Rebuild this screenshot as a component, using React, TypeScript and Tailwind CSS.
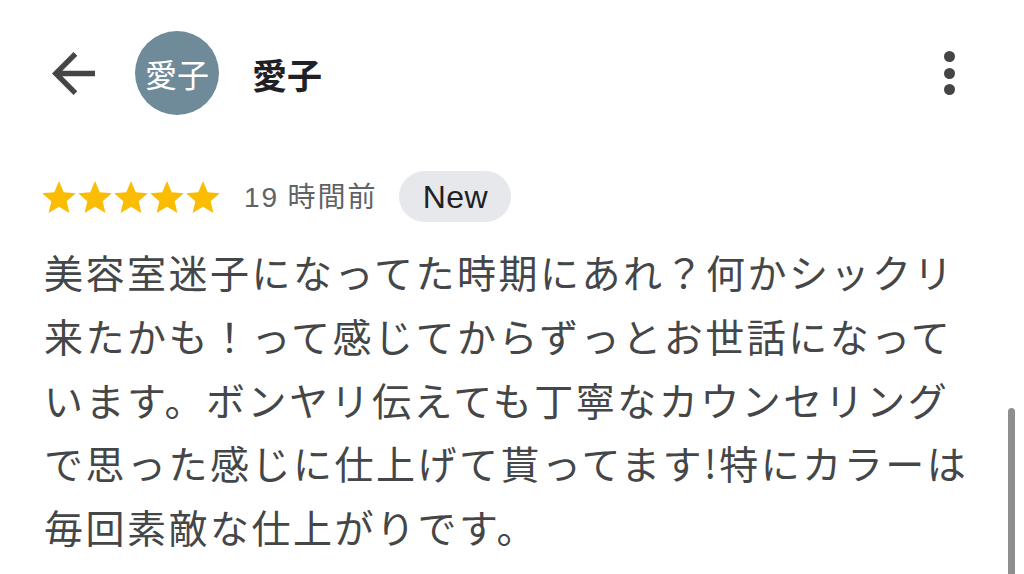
import React from 'react';

const jp = { fontFamily: "'Noto Sans CJK JP', 'Noto Sans', sans-serif" };
const latin = { fontFamily: "'Liberation Sans', 'Noto Sans CJK JP', sans-serif" };

const lines = [
  '美容室迷子になってた時期にあれ？何かシックリ',
  '来たかも！って感じてからずっとお世話になって',
  'います。ボンヤリ伝えても丁寧なカウンセリング',
  'で思った感じに仕上げて貰ってます!特にカラーは',
  '毎回素敵な仕上がりです。',
];

function Star() {
  return (
    <svg width="34" height="32" viewBox="2 2 20 19" className="shrink-0">
      <path fill="#fbbc04" d="M12 17.27L18.18 21l-1.64-7.03L22 9.24l-7.19-.61L12 2 9.19 8.63 2 9.24l5.46 4.73L5.82 21z" />
    </svg>
  );
}

export default function App() {
  return (
    <div className="relative h-[574px] w-[1024px] overflow-hidden bg-white" style={jp}>
      {/* Header */}
      <div className="flex h-[84px] items-center pt-[31px] pl-[52px] pr-[69px] box-content">
        <svg width="43" height="43" viewBox="4 4 16 16" className="shrink-0">
          <path fill="#454545" d="M20 11H7.83l5.59-5.59L12 4l-8 8 8 8 1.41-1.41L7.83 13H20v-2z" />
        </svg>
        <div className="ml-[40px] flex h-[84px] w-[84px] shrink-0 items-center justify-center rounded-full bg-[#6f8a99]">
          <span className="text-[32px] leading-none text-white">愛子</span>
        </div>
        <span className="ml-[33px] text-[35px] font-bold leading-none text-[#202124]">愛子</span>
        <div className="ml-auto flex flex-col items-center gap-[5.5px]">
          <span className="h-[11px] w-[11px] rounded-full bg-[#454545]" />
          <span className="h-[11px] w-[11px] rounded-full bg-[#454545]" />
          <span className="h-[11px] w-[11px] rounded-full bg-[#454545]" />
        </div>
      </div>

      {/* Rating row */}
      <div className="mt-[56px] flex h-[51px] items-center pl-[42px]">
        <div className="flex gap-[2px]">
          <Star />
          <Star />
          <Star />
          <Star />
          <Star />
        </div>
        <span className="ml-[24px] text-[28px] leading-none tracking-[2px] text-[#5f6368]">
          <span style={latin}>19</span> 時間前
        </span>
        <span
          className="ml-[22px] flex h-[51px] w-[112px] items-center justify-center rounded-full bg-[#e6e8eb] text-[32px] leading-none tracking-[0.5px] text-[#202124]"
          style={latin}
        >
          New
        </span>
      </div>

      {/* Review body */}
      <div className="mt-[18px] pl-[44px] text-[39px] leading-[63.75px] tracking-[2.5px] text-[#444648]">
        {lines.map((l) => (
          <div key={l} className="whitespace-nowrap">
            {l}
          </div>
        ))}
      </div>

      {/* Scrollbar */}
      <div className="absolute left-[1008px] top-[408px] h-[180px] w-[7px] rounded-t-full bg-[#8e8e8e]" />
    </div>
  );
}
